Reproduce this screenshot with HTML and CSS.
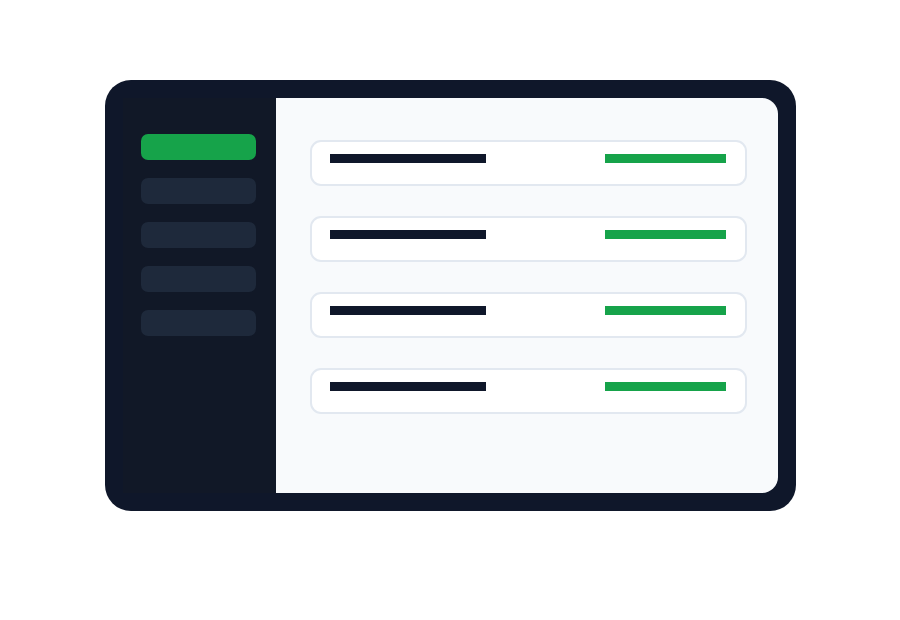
FILE: index.html
```html
<!DOCTYPE html>
<html>
<head>
<meta charset="utf-8">
<link rel="stylesheet" href="styles.css">
</head>
<body>
<div class="stage">
  <div class="frame">
    <div class="sidebar">
      <div class="nav nav-active"></div>
      <div class="nav"></div>
      <div class="nav"></div>
      <div class="nav"></div>
      <div class="nav"></div>
    </div>
    <div class="main">
      <div class="card"><div class="bar-dark"></div><div class="bar-green"></div></div>
      <div class="card"><div class="bar-dark"></div><div class="bar-green"></div></div>
      <div class="card"><div class="bar-dark"></div><div class="bar-green"></div></div>
      <div class="card"><div class="bar-dark"></div><div class="bar-green"></div></div>
    </div>
  </div>
</div>
</body>
</html>
```
FILE: styles.css
```css
html, body {
  margin: 0;
  padding: 0;
  background: #ffffff;
  font-family: "Liberation Sans", sans-serif;
}
.stage {
  width: 900px;
  height: 620px;
  padding: 80px 0 0 105px;
  box-sizing: border-box;
}
.frame {
  width: 691px;
  height: 431px;
  box-sizing: border-box;
  padding: 18px;
  background: #0f172a;
  border-radius: 26px;
  display: flex;
}
.sidebar {
  width: 153px;
  flex: none;
  background: #111827;
  box-sizing: border-box;
  padding: 36px 20px 0 18px;
  display: flex;
  flex-direction: column;
  gap: 18px;
}
.nav {
  height: 26px;
  border-radius: 7px;
  background: #1e293b;
}
.nav-active {
  background: #16a34a;
}
.main {
  flex: 1;
  background: #f8fafc;
  border-radius: 0 16px 16px 0;
  box-sizing: border-box;
  padding: 42px 31px 0 34px;
  display: flex;
  flex-direction: column;
  gap: 30px;
}
.card {
  height: 46px;
  box-sizing: border-box;
  background: #ffffff;
  border: 2px solid #e2e8f0;
  border-radius: 11px;
  padding: 12px 19px 0 18px;
  display: flex;
  justify-content: space-between;
  align-items: flex-start;
}
.bar-dark {
  width: 156px;
  height: 9px;
  background: #0f172a;
}
.bar-green {
  width: 121px;
  height: 9px;
  background: #16a34a;
}
```
